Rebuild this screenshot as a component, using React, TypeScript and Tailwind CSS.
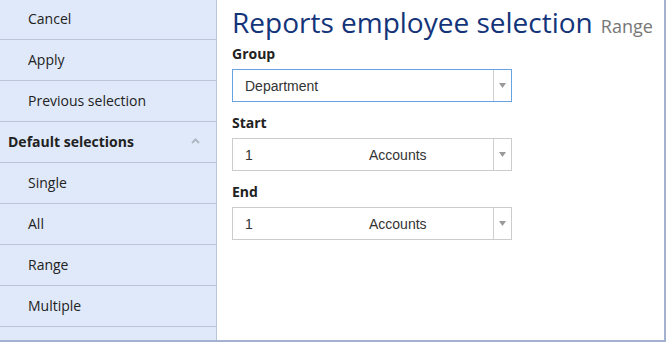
const menu = [
  { label: "Cancel", h: "h-[40px]" },
  { label: "Apply", h: "h-[41px]" },
  { label: "Previous selection", h: "h-[41px]" },
];
const defaults = ["Single", "All", "Range", "Multiple"];

function Arrow() {
  return (
    <div className="w-[18px] h-full border-l border-[#cfcfcf] flex items-center justify-center">
      <svg width="7" height="5" viewBox="0 0 7 5">
        <path d="M0 0 L7 0 L3.5 5 Z" fill="#9a9a9a" />
      </svg>
    </div>
  );
}

function Select({ children, focused }: { children: React.ReactNode; focused?: boolean }) {
  return (
    <div
      className={`w-[280px] h-[33px] flex items-center border ${
        focused ? "border-[#66a3e0]" : "border-[#cccccc]"
      } bg-white`}
      style={{ fontFamily: '"Liberation Sans", Arial, sans-serif' }}
    >
      <div className="flex-1 flex items-center pl-[12px] pt-[2px] text-[14px] text-[#333]">{children}</div>
      <Arrow />
    </div>
  );
}

export default function App() {
  return (
    <div
      className="w-[666px] h-[342px] flex bg-white border-r-2 border-b-2 border-[#a3b2d3] overflow-hidden"
      style={{ fontFamily: '"Open Sans", sans-serif' }}
    >
      <div className="w-[217px] shrink-0 bg-[#dfe9f9] border-r border-[#b9c5d8] flex flex-col">
        {menu.map((m) => (
          <div
            key={m.label}
            className={`${m.h} shrink-0 border-b border-[#b9c5d8] flex items-center pl-[28px] pb-[2px] text-[14px] text-[#222]`}
          >
            {m.label}
          </div>
        ))}
        <div className="h-[41px] shrink-0 border-b border-[#b9c5d8] flex items-center justify-between pl-[8px] pr-[16px] pb-[2px] text-[14px] font-bold text-[#222]">
          <span>Default selections</span>
          <svg width="9" height="6" viewBox="0 0 9 6">
            <path d="M1 5 L4.5 1.5 L8 5" stroke="#b0b8c4" strokeWidth="2" fill="none" />
          </svg>
        </div>
        {defaults.map((d) => (
          <div
            key={d}
            className="h-[41px] shrink-0 border-b border-[#b9c5d8] flex items-center pl-[28px] pb-[2px] text-[14px] text-[#222]"
          >
            {d}
          </div>
        ))}
      </div>
      <div className="flex-1 pl-[15px] pt-[2px]">
        <div className="flex items-baseline gap-[8px] h-[42px]">
          <span className="text-[28px] leading-[40px] text-[#14347a]">Reports employee selection</span>
          <span className="text-[18px] text-[#777]">Range</span>
        </div>
        <div className="text-[14px] font-bold text-[#222] leading-[20px]">Group</div>
        <div className="mt-[5px]">
          <Select focused>Department</Select>
        </div>
        <div className="mt-[11px] text-[14px] font-bold text-[#222] leading-[20px]">Start</div>
        <div className="mt-[5px]">
          <Select>
            <span className="w-[124px]">1</span>
            <span>Accounts</span>
          </Select>
        </div>
        <div className="mt-[11px] text-[14px] font-bold text-[#222] leading-[20px]">End</div>
        <div className="mt-[5px]">
          <Select>
            <span className="w-[124px]">1</span>
            <span>Accounts</span>
          </Select>
        </div>
      </div>
    </div>
  );
}
